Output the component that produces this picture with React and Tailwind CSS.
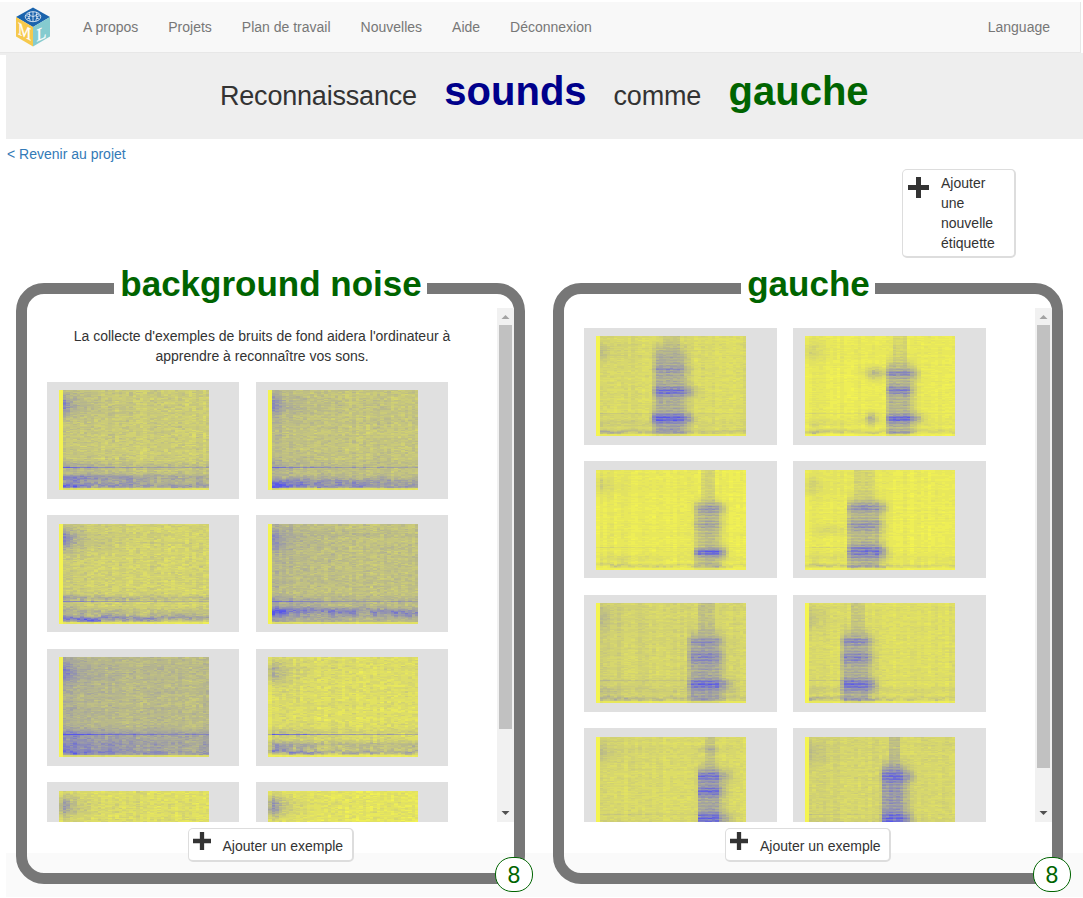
import React from "react";

const COLS = 43;
const ROWS = 100;
const LEVELS = 28;

function makeRandom(seed) {
  let s = seed >>> 0;
  return () => {
    s = (s + 0x6d2b79f5) >>> 0;
    let t = s;
    t = Math.imul(t ^ (t >>> 15), t | 1);
    t ^= t + Math.imul(t ^ (t >>> 7), t | 61);
    return ((t ^ (t >>> 14)) >>> 0) / 4294967296;
  };
}

const bell = (d, w) => Math.exp(-(d * d) / (2 * w * w));

function buildPaths(spec, seed) {
  const rnd = makeRandom(seed * 977 + 13);
  const paths = Array.from({ length: LEVELS }, () => "");
  const { base, noise = 0.09, edge, blob = 0.2, line = 0.1, low = [], voice } = spec;
  const colShade = Array.from({ length: COLS }, () => (rnd() - 0.5) * 0.05);
  const rowShade = Array.from({ length: ROWS }, () => (rnd() - 0.5) * 0.04);
  const drifts = low.map(() => {
    let d = 0.5;
    return Array.from({ length: COLS }, () => (d = d * 0.55 + rnd() * 0.45));
  });
  for (let c = 0; c < COLS; c++) {
    const x0 = Math.round(c * 3.5);
    const x1 = Math.min(150, Math.round((c + 1) * 3.5));
    const x = x0 + 1.5;
    let grain = 0;
    for (let y = 0; y < ROWS; y++) {
      if (y % 2 === 0 || rnd() < 0.5) grain = (rnd() + rnd() - 1) * noise;
      let v = base + grain + colShade[c] + rowShade[y];
      v += base * 0.3 * Math.exp(-x / 30);
      v += blob * bell(y - 15, 7) * Math.exp(-x / 9) * (0.7 + rnd() * 0.6);
      v += blob * 0.22 * bell(y - 15, 9) * Math.exp(-x / 40);
      if (y === 77) v += line * (0.45 + 0.9 * Math.exp(-x / 60));
      low.forEach(([ly, lw, la, fade], i) => {
        const d = drifts[i][c];
        v += la * bell(y - ly - (d - 0.5) * 5, lw) * (0.4 + 0.7 * Math.exp(-x / fade)) * (0.45 + 1.1 * d) * (0.7 + rnd() * 0.5);
      });
      if (voice) {
        const { from, to, top, body, bands, tails = [] } = voice;
        const inside = x >= from && x <= to ? 0.82 + 0.18 * bell(x - (from + to) / 2, 10) : x < from ? bell(x - from, 1.5) * 0.7 : bell(x - to, 5) * 0.6;
        const rise = 1 / (1 + Math.exp(-(y - top) / 3.5));
        const faint = (x > from + 6 && x < to - 3 ? 0.15 : 0) * (1 - rise);
        let w = body * rise + faint;
        for (const [by, bw, ba] of bands) w += ba * bell(y - by, bw);
        v += w * inside * (y % 3 === 1 ? 0.74 : y % 3 === 0 ? 1.02 : 0.9) * (0.88 + rnd() * 0.24);
        for (const [ty, tx, tw, ta] of tails) v += ta * bell(y - ty, 4) * bell(x - tx, tw) * (0.7 + rnd() * 0.4);
      }
      if (y >= 98) v *= 0.35;
      if (c === 0) v = edge ? 0.01 : v * 0.5;
      const k = Math.max(0, Math.min(LEVELS - 1, Math.round(v * (LEVELS - 1))));
      paths[k] += `M${x0} ${y}h${x1 - x0}v1h${x0 - x1}z`;
    }
  }
  return paths;
}

function levelColor(k) {
  const t = k / (LEVELS - 1);
  const r = Math.round(244 - 158 * t);
  const b = Math.round(80 + 155 * t);
  return `rgb(${r},${r},${b})`;
}

function Spectrogram({ spec, seed }) {
  const paths = React.useMemo(() => buildPaths(spec, seed), [spec, seed]);
  return (
    <svg width="150" height="100" viewBox="0 0 150 100" shapeRendering="crispEdges" className="block shrink-0">
      {paths.map((d, k) => (d ? <path key={k} d={d} fill={levelColor(k)} /> : null))}
    </svg>
  );
}

const noiseSamples = [
  { base: 0.25, edge: true, blob: 0.5, line: 0.35, low: [[75, 3, 0.18, 30], [87, 2.5, 0.28, 50], [95, 1.8, 0.45, 60], [90, 6, 0.14, 200]] },
  { base: 0.29, edge: true, blob: 0.4, line: 0.3, low: [[75, 3, 0.14, 30], [91, 2.5, 0.3, 50], [96, 1.6, 0.45, 50], [90, 5, 0.1, 200]] },
  { base: 0.21, edge: true, blob: 0.6, line: 0.35, low: [[74, 2, 0.36, 35], [87, 3, 0.28, 30], [94, 2, 0.5, 160]] },
  { base: 0.32, edge: true, blob: 0.4, line: 0.25, low: [[76, 3, 0.16, 40], [87, 2.8, 0.58, 60], [94, 4, 0.14, 100]] },
  { base: 0.36, edge: true, blob: 0.38, line: 0.4, low: [[76, 3, 0.2, 40], [88, 7, 0.26, 150], [95, 1.5, 0.3, 60]] },
  { base: 0.14, blob: 0.45, line: 0.5, low: [[75, 3, 0.2, 25], [87, 3, 0.3, 25], [95, 1.3, 0.6, 40], [90, 5, 0.12, 200]] },
  { base: 0.14, blob: 0.55, line: 0.2 },
  { base: 0.09, blob: 0.7, line: 0.2 },
];

const lowHum = [[87, 3, 0.1, 50], [95, 1.3, 0.26, 50]];
const wordSamples = [
  { base: 0.16, noise: 0.05, edge: true, low: lowHum, voice: { from: 59, to: 86, top: 12, body: 0.34, bands: [[33, 2.5, 0.16], [55, 3, 0.42], [82, 3, 0.5]], tails: [[55, 95, 5, 0.22], [82, 94, 4, 0.2], [82, 57, 2, 0.3]] } },
  { base: 0.06, noise: 0.035, low: lowHum, voice: { from: 83, to: 104, top: 26, body: 0.38, bands: [[37, 2.5, 0.28], [54, 3, 0.35], [82, 2.5, 0.5]], tails: [[37, 70, 7, 0.35], [82, 66, 4, 0.35], [82, 112, 5, 0.25], [38, 110, 4, 0.2]] } },
  { base: 0.06, noise: 0.035, low: lowHum, voice: { from: 100, to: 121, top: 32, body: 0.31, bands: [[38, 4, 0.28], [54, 4, 0.16], [82, 2.5, 0.6]], tails: [[82, 127, 4, 0.25], [38, 126, 4, 0.12]] } },
  { base: 0.06, noise: 0.035, low: lowHum, voice: { from: 44, to: 73, top: 30, body: 0.35, bands: [[37, 3.5, 0.3], [55, 3.5, 0.25], [81, 4.5, 0.42]], tails: [[59, 24, 12, 0.12], [81, 78, 5, 0.2], [37, 79, 4, 0.15]] } },
  { base: 0.19, noise: 0.05, edge: true, low: lowHum, voice: { from: 94, to: 122, top: 31, body: 0.34, bands: [[38, 2.5, 0.18], [54, 4, 0.22], [81, 3, 0.4]], tails: [[81, 130, 5, 0.2]] } },
  { base: 0.14, noise: 0.05, edge: true, low: lowHum, voice: { from: 38, to: 63, top: 29, body: 0.34, bands: [[38, 2.5, 0.28], [54, 4, 0.26], [81, 3.5, 0.42]], tails: [[81, 68, 3, 0.2]] } },
  { base: 0.16, noise: 0.05, edge: true, low: lowHum, voice: { from: 103, to: 123, top: 31, body: 0.37, bands: [[12, 2, 0.12], [39, 4, 0.34], [54, 3.5, 0.34], [81, 4, 0.4]], tails: [[38, 133, 4, 0.15], [81, 133, 4, 0.15]] } },
  { base: 0.18, noise: 0.05, edge: true, low: lowHum, voice: { from: 78, to: 99, top: 27, body: 0.43, bands: [[39, 4, 0.3], [81, 4, 0.32]], tails: [[39, 105, 4, 0.15], [81, 103, 4, 0.15]] } },
];

function Logo() {
  return (
    <svg width="36" height="41" viewBox="0 0 36 41" className="block">
      <polygon points="18,0.5 35,10 18,20 1,10" fill="#1b64ad" />
      <polygon points="1,10 18,20 18,39.5 1,29.5" fill="#f6c94c" />
      <polygon points="35,10 18,20 18,39.5 35,29.5" fill="#85cbcf" />
      <g fill="none" stroke="#fff" strokeWidth="0.75">
        <ellipse cx="18" cy="9.7" rx="7.8" ry="5" />
        <path d="M18 4.8v9.8M14.8 5.2c-1.800 1.500 1.400 2.200-.4 4s1.200 2.800.6 4.800M21.200 5.200c1.800 1.500-1.400 2.200.4 4s-1.200 2.800-.6 4.800M10.700 9.200c1.800-1.500 2.500 1.400 4 0s2.300 1 3.300 0M25.300 9.200c-1.800-1.500-2.500 1.400-4 0s-2.300 1-3.300 0M12 12l3-1M24 12l-3-1M12 7l3 .6M24 7l-3 .6" />
      </g>
      <g fill="#fff" fontFamily="Liberation Serif, serif" fontSize="18" stroke="#fff" strokeWidth="0.3">
        <text transform="matrix(0.82 0.42 0 1 2.900 27)">M</text>
        <text transform="matrix(0.9 -0.4 0 1 21.500 34.700)">L</text>
      </g>
    </svg>
  );
}

function Plus({ size }) {
  return (
    <svg width={size} height={size} viewBox="0 0 21 21" className="block shrink-0">
      <path d="M8 0h5v8h8v5h-8v8H8v-8H0V8h8z" fill="#333" />
    </svg>
  );
}

function ScrollBar({ tall }) {
  return (
    <div className="flex h-[514px] w-[17px] shrink-0 flex-col items-center bg-[#f1f1f1]">
      <svg width="17" height="17" viewBox="0 0 17 17" className="block shrink-0">
        <path d="M4.500 11h8L8.500 7z" fill="#a3a3a3" />
      </svg>
      <div className={tall ? "h-[443px] w-[13px] bg-[#c1c1c1]" : "h-[404px] w-[13px] bg-[#c1c1c1]"} />
      <svg width="17" height="17" viewBox="0 0 17 17" className="mt-auto block shrink-0">
        <path d="M4.500 6h8l-4 4z" fill="#505050" />
      </svg>
    </div>
  );
}

function Panel({ title, intro, samples, seed, wide }) {
  return (
    <section className={(wide ? "w-[510px]" : "w-[509px]") + " relative flex h-[601px] shrink-0 flex-col items-center rounded-[28px] border-[11px] border-[#777]"}>
      <h2 className="-mt-[30px] h-[44px] bg-white pr-[5px] pl-[6px] text-[35px] leading-[40px] font-bold whitespace-nowrap text-[#006400]">
        {title}
      </h2>
      <div className="flex h-[514px] w-full shrink-0 overflow-hidden">
        <div className="h-full min-w-0 flex-1 overflow-hidden">
          {intro ? (
            <p className="mt-[18px] h-[55.9px] text-center text-sm leading-5 text-[#333]">
              La collecte d'exemples de bruits de fond aidera l'ordinateur à
              <br />
              apprendre à reconnaître vos sons.
            </p>
          ) : (
            <div className="h-[19.9px]" />
          )}
          <div className={(wide ? "grid-cols-[193px_193px] gap-x-[16px]" : "grid-cols-[192px_192px] gap-x-[17px]") + " ml-[20px] grid gap-y-[16.5px]"}>
            {samples.map((spec, i) => (
              <div key={i} className="h-[117px] bg-[#e0e0e0] pt-[8.5px] pl-[12px]">
                <Spectrogram spec={spec} seed={seed + i} />
              </div>
            ))}
          </div>
        </div>
        <ScrollBar tall={wide} />
      </div>
      <button className="mt-[6px] flex h-[34px] w-[166px] shrink-0 rounded-[5px] border border-r-2 border-b-2 border-[#ddd] bg-white pt-[3px] pl-[4px] text-sm leading-5 text-[#333]">
        <Plus size={18} />
        <span className="mt-[4px] ml-[12px] whitespace-nowrap">Ajouter un exemple</span>
      </button>
      <div className="absolute -right-[19px] -bottom-[19px] flex h-[35px] w-[38px] items-center justify-center rounded-[17px] border border-[#006400] bg-white pt-px text-[23px] leading-none text-[#006400]">
        8
      </div>
    </section>
  );
}

export default function App() {
  const links = ["A propos", "Projets", "Plan de travail", "Nouvelles", "Aide", "Déconnexion"];
  return (
    <div className="h-[898px] w-[1083px] overflow-hidden bg-white pt-[2px] font-['Liberation_Sans',Arial,sans-serif] text-sm text-[#333]">
      <nav className="flex h-[51px] w-[1081px] items-center border-r border-b border-[#e7e7e7] bg-[#f8f8f8] pr-[30px] pl-[15px] text-[#777]">
        <Logo />
        <div className="ml-[32px] flex gap-[30px]">
          {links.map((l) => (
            <a key={l}>{l}</a>
          ))}
        </div>
        <a className="ml-auto">Language</a>
      </nav>
      <div className="h-[2px] bg-[#eee]" />
      <header className="ml-[6px] flex h-[84px] items-baseline bg-[#eee] pt-[13px] pl-[214px] text-[27px] leading-[46px] tracking-[-0.2px] whitespace-nowrap">
        <span>Reconnaissance</span>
        <b className="ml-[27.5px] text-[40px] tracking-normal text-[#00008b]">sounds</b>
        <span className="ml-[27px]">comme</span>
        <b className="ml-[27.5px] text-[40px] tracking-normal text-[#006400]">gauche</b>
      </header>
      <a className="mt-[5px] ml-[7px] block h-[20px] leading-5 text-[#337ab7]">&lt; Revenir au projet</a>
      <button className="mt-[5px] ml-[902px] flex h-[89px] w-[114px] rounded-[5px] border border-r-2 border-b-2 border-[#ddd] bg-white pt-[3px] pl-[5px] text-left leading-5">
        <div className="mt-[4px]">
          <Plus size={21} />
        </div>
        <span className="ml-[12px] w-[60px]">Ajouter une nouvelle étiquette</span>
      </button>
      <main className="relative z-10 mt-[25px] flex gap-[28px] pl-[16px]">
        <Panel title="background noise" intro samples={noiseSamples} seed={1} />
        <Panel title="gauche" samples={wordSamples} seed={40} wide />
      </main>
      <footer className="-mt-[31px] ml-[6px] h-[44px] bg-[#fafafa]" />
    </div>
  );
}
